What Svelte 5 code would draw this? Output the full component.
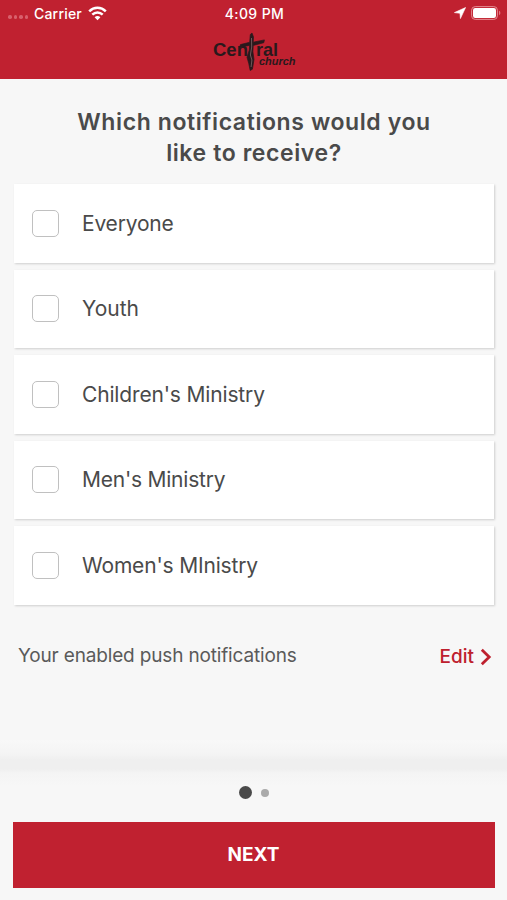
<script>
  let groups = $state([
    { name: 'Everyone', on: false, spacing: -0.2 },
    { name: 'Youth', on: false, spacing: 0 },
    { name: "Children's Ministry", on: false, spacing: -0.16 },
    { name: "Men's Ministry", on: false, spacing: -0.23 },
    { name: "Women's MInistry", on: false, spacing: -0.17 }
  ]);
</script>

<div class="screen">
  <header>
    <div class="status">
      <div class="left">
        <span class="signal"><i></i><i></i><i></i><i></i></span>
        <span class="carrier">Carrier</span>
        <svg class="wifi" width="19" height="15" viewBox="0 0 19 15">
          <g fill="none" stroke="#fff" stroke-width="2.5">
            <path d="M1.2 5.3C5.9.7 13.1.7 17.8 5.3" />
            <path d="M4.3 8.6c3-2.9 7.4-2.9 10.4 0" />
          </g>
          <path d="M9.5 14.2 6.6 11.2c1.7-1.5 4.1-1.5 5.8 0z" fill="#fff" />
        </svg>
      </div>
      <span class="time">4:09 PM</span>
      <div class="right">
        <svg width="12" height="12" viewBox="0 0 12 12"><path d="M11.6.5 6.4 11.6 6 6.3.4 5.6z" fill="#fff" stroke="#fff" stroke-width=".6" /></svg>
        <svg width="30" height="14" viewBox="0 0 30 14">
          <rect x=".6" y=".6" width="25.8" height="12.8" rx="3.6" fill="none" stroke="#e58a91" stroke-width="1" />
          <rect x="2" y="2" width="23" height="10" rx="2.2" fill="#fff" />
          <path d="M28 4.8c1.8.5 1.8 3.9 0 4.4z" fill="#df7780" />
        </svg>
      </div>
    </div>
    <svg class="logo" width="86" height="40" viewBox="0 0 86 40">
      <g fill="#29191c" font-family="'Liberation Sans', Arial, sans-serif" font-weight="700">
        <text x="2" y="24" font-size="19" textLength="35" lengthAdjust="spacingAndGlyphs">Cen</text>
        <text x="45" y="24" font-size="19" textLength="22" lengthAdjust="spacingAndGlyphs">ral</text>
        <text x="48" y="32.7" font-size="10.5" font-style="italic" textLength="36.5" lengthAdjust="spacingAndGlyphs">church</text>
      </g>
      <path d="M39.3 2.5 41 1l1.5 4-.3 5.2 11.2-2.3-.6 2.8-10.6 2.7-.3 6.4 1.1 7.6-1.6 9.8-2.2 1.3-1.4-6.8-1.8-6.4 2.3-7.4.3-4.5-9.8 1.8.6-2.6 9.3-2.3z" fill="#29191c" stroke="#29191c" stroke-width=".7" />
      <path d="m40.5 6 .2 9-1.3 8 1.5 5-.8 7" fill="none" stroke="#8c7376" stroke-width=".7" />
    </svg>
  </header>

  <main>
    <h1>Which notifications would you<br />like to receive?</h1>
    <div class="list">
      {#each groups as group}
        <label class="row">
          <input type="checkbox" bind:checked={group.on} />
          <span style="letter-spacing: {group.spacing}px">{group.name}</span>
        </label>
      {/each}
    </div>
    <div class="enabled">
      <span>Your enabled push notifications</span>
      <a href="#edit">Edit
        <svg width="12" height="18" viewBox="0 0 12 18"><path d="m1.8 1.8 7.4 7.2-7.4 7.2" fill="none" stroke="#be202e" stroke-width="2.8" /></svg>
      </a>
    </div>
  </main>

  <footer>
    <div class="shade"></div>
    <div class="dots"><i class="active"></i><i></i></div>
    <button>NEXT</button>
  </footer>
</div>

<style>
  .screen {
    width: 507px;
    height: 900px;
    display: flex;
    flex-direction: column;
    overflow: hidden;
    background: #f7f7f7;
    color: #4a4a4a;
    font-family: Inter, 'Liberation Sans', sans-serif;
  }
  header {
    flex: none;
    height: 79px;
    background: #c02130;
    display: flex;
    flex-direction: column;
    align-items: center;
  }
  .status {
    width: 100%;
    height: 26px;
    box-sizing: border-box;
    padding: 0 6px 0 8px;
    display: grid;
    grid-template-columns: 1fr auto 1fr;
    align-items: center;
    color: #fff;
    font-size: 14px;
    font-weight: 500;
  }
  .left, .right, .signal { display: flex; align-items: center; }
  .signal { gap: 2px; width: 26px; padding-top: 8px; }
  .signal i { width: 3.5px; height: 3.5px; border-radius: 50%; background: #d8606c; }
  .carrier { letter-spacing: 0.2px; }
  .wifi { margin-left: 6px; }
  .time { letter-spacing: 0.4px; }
  .right { justify-content: flex-end; gap: 5px; }
  .logo { margin: 6px 0 0 1px; }
  main { flex: 1; padding: 28px 13px 0 14px; }
  h1 {
    margin: 0;
    font-size: 23px;
    line-height: 30.5px;
    font-weight: 600;
    text-align: center;
    letter-spacing: 0.6px;
  }
  .list { margin-top: 16px; display: flex; flex-direction: column; gap: 7px; }
  .row {
    height: 78.5px;
    display: flex;
    align-items: center;
    background: #fff;
    box-shadow: 1px 1px 2px rgba(0, 0, 0, 0.16);
    font-size: 21px;
  }
  input {
    appearance: none;
    flex: none;
    width: 27px;
    height: 27px;
    margin: 0 23px 0 18px;
    border: 1.5px solid #c0c0c0;
    border-radius: 5px;
    background: #fff;
  }
  .enabled {
    margin-top: 37px;
    padding: 0 2px 0 4px;
    display: flex;
    justify-content: space-between;
    align-items: center;
    font-size: 19px;
    line-height: 26px;
    letter-spacing: -0.16px;
    color: #5a5a5a;
  }
  .enabled a {
    display: flex;
    align-items: center;
    gap: 6px;
    color: #be202e;
    text-decoration: none;
    font-weight: 500;
    letter-spacing: 0;
    padding-top: 2px;
  }
  footer { flex: none; height: 160px; display: flex; flex-direction: column; align-items: center; }
  .shade {
    width: 100%;
    height: 46px;
    background: linear-gradient(#f8f8f8, #f4f4f4 14px, #efefef 20px, #efefef 29px, #f4f4f4 33px, #f7f7f7);
  }
  .dots { height: 13px; display: flex; align-items: center; gap: 9px; margin-left: 1px; }
  .dots i { width: 8px; height: 8px; border-radius: 50%; background: #aaa; }
  .dots .active { width: 13px; height: 13px; background: #4a4a4a; }
  button {
    width: 482px;
    height: 66px;
    margin-top: 23px;
    padding: 0 0 2px;
    border: 0;
    background: #c02130;
    color: #fff;
    font: 700 19px Inter, 'Liberation Sans', sans-serif;
  }
</style>
